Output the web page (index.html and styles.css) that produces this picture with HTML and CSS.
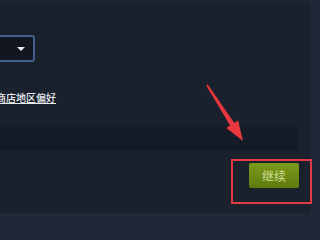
FILE: index.html
```html
<!DOCTYPE html>
<html lang="zh">
<head>
<meta charset="utf-8">
<link rel="stylesheet" href="styles.css">
</head>
<body>
<div class="page">
  <div class="panel">
    <div class="select"><span class="caret"></span></div>
    <a class="pref">商店地区偏好</a>
    <div class="band"></div>
    <div class="actions">
      <button class="continue">继续</button>
    </div>
  </div>
  <div class="footer"></div>
  <div class="highlight"></div>
  <svg class="arrow" width="320" height="240" viewBox="0 0 320 240">
    <polygon points="206.2,82.5 230.1,122.6 226.3,125.0 243,138 238.1,117.4 234.3,119.9 207.8,81.5" fill="#e8383d"/>
  </svg>
</div>
</body>
</html>
```

FILE: styles.css
```css
html, body {
  margin: 0;
  padding: 0;
  background: #1d2737;
  overflow: hidden;
}
.page {
  position: relative;
  width: 320px;
  height: 240px;
  font-family: "Noto Sans CJK SC", "Noto Sans", sans-serif;
}
.panel {
  margin-top: 3px;
  width: 310px;
  height: 210px;
  background: #1a212d;
  padding-top: 32px;
  box-sizing: border-box;
  overflow: hidden;
}
.select {
  margin-left: -60px;
  width: 95px;
  height: 27px;
  box-sizing: border-box;
  border: 2px solid #42608f;
  border-radius: 3px;
  background: #111620;
  display: flex;
  justify-content: flex-end;
  align-items: center;
  padding-right: 8px;
}
.caret {
  width: 0;
  height: 0;
  border-left: 4px solid transparent;
  border-right: 4px solid transparent;
  border-top: 4px solid #e6e9ee;
}
.pref {
  display: block;
  margin-top: 30px;
  margin-left: -4px;
  font-size: 10px;
  line-height: 12px;
  font-weight: 500;
  color: #e8ebf0;
  text-decoration: underline;
  text-underline-offset: 1px;
  white-space: nowrap;
}
.band {
  margin-top: 21px;
  width: 298px;
  height: 25px;
  background: linear-gradient(#171d28, #141a24);
}
.actions {
  margin-top: 13px;
  display: flex;
  justify-content: flex-end;
  padding-right: 11px;
}
.continue {
  width: 50px;
  height: 25px;
  border: none;
  border-radius: 2px;
  background: linear-gradient(#7c9c19, #5d7a0f);
  color: #cfdd95;
  font-family: "Noto Sans CJK SC", sans-serif;
  font-size: 12px;
  padding: 0;
}
.footer {
  height: 27px;
  background: #1e2839;
}
.highlight {
  position: absolute;
  left: 231px;
  top: 156px;
  width: 81px;
  height: 45px;
  box-sizing: border-box;
  border: 2px solid #e23a44;
}
.arrow {
  position: absolute;
  left: 0;
  top: 0;
}
```
